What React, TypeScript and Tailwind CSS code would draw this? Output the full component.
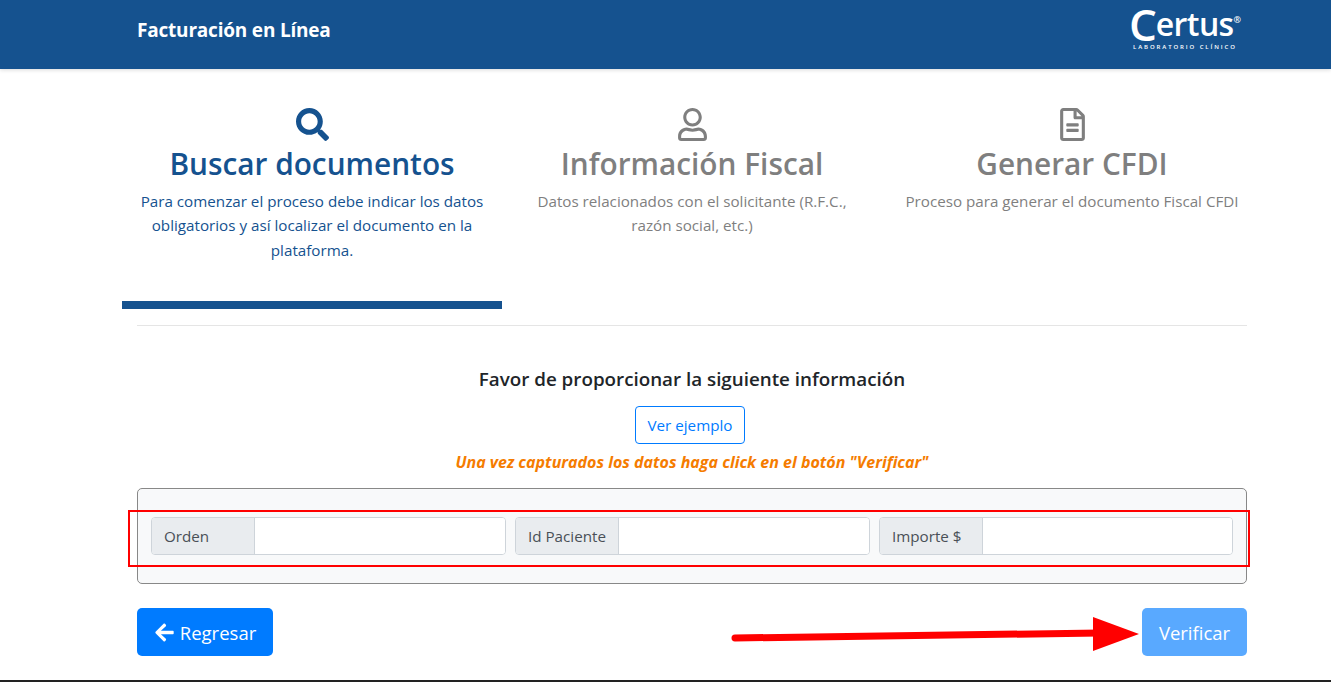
import { FaSearch, FaRegUser, FaRegFileAlt, FaArrowLeft } from "react-icons/fa";

const font = "font-['Open_Sans','Noto_Sans',sans-serif]";

const steps = [
  {
    title: "Buscar documentos",
    desc: "Para comenzar el proceso debe indicar los datos obligatorios y así localizar el documento en la plataforma.",
    icon: <FaSearch className="h-[33px] w-[33px]" />,
    color: "text-[#15528f]",
    active: true,
  },
  {
    title: "Información Fiscal",
    desc: "Datos relacionados con el solicitante (R.F.C., razón social, etc.)",
    icon: <FaRegUser className="h-[33px] w-[33px]" />,
    color: "text-[#7f7f7f]",
    active: false,
  },
  {
    title: "Generar CFDI",
    desc: "Proceso para generar el documento Fiscal CFDI",
    icon: <FaRegFileAlt className="h-[33px] w-[33px]" />,
    color: "text-[#7f7f7f]",
    active: false,
  },
];

const fields = ["Orden", "Id Paciente", "Importe $"];

function Logo() {
  return (
    <div className="flex w-[112px] flex-col items-center text-white">
      <div className="flex h-[30px] items-end font-['Open_Sans',sans-serif] font-semibold">
        <span className="text-[44px] leading-[30px]">C</span>
        <span className="ml-[-1px] text-[32px] leading-[30px] tracking-[-0.6px]">ertus</span>
        <span className="mb-[15px] text-[9px] leading-none">®</span>
      </div>
      <div className="mt-[5px] font-['Open_Sans',sans-serif] text-[6px] font-semibold leading-none tracking-[1.9px]">
        LABORATORIO CLÍNICO
      </div>
    </div>
  );
}

function Field({ label }: { label: string }) {
  return (
    <div className="flex h-[38px] overflow-hidden rounded-[4px] border border-[#ced4da] bg-white">
      <span className="flex w-[103px] shrink-0 items-center border-r border-[#ced4da] bg-[#e9ecef] px-3 text-[#495057]">
        {label}
      </span>
      <input className="min-w-0 flex-1 bg-white outline-none" />
    </div>
  );
}

export default function App() {
  return (
    <div className={`${font} relative h-[682px] overflow-hidden bg-white text-[15.2px] text-[#212529]`}>
      <header className="h-[69px] bg-[#15528f] shadow-[0_1px_4px_rgba(0,0,0,0.15)]">
        <div className="ml-[122px] flex h-full w-[1140px] items-center justify-between px-[15px]">
          <h1 className="mt-[-8px] text-[19px] font-bold tracking-[-0.2px] text-white">Facturación en Línea</h1>
          <div className="mr-[6px] mt-[-11px]">
            <Logo />
          </div>
        </div>
      </header>

      <main className="ml-[122px] w-[1140px]">
        <div className="flex pt-[39px]">
          {steps.map((s) => (
            <div key={s.title} className={`flex h-[193px] w-[380px] flex-col items-center ${s.color}`}>
              {s.icon}
              <h2 className="mt-[1px] text-[29.8px] font-semibold leading-[44px]">{s.title}</h2>
              <p className="mt-[3px] px-[15px] text-center leading-[24.3px]">{s.desc}</p>
            </div>
          ))}
        </div>
        <div className="h-[8px] w-[380px] bg-[#15528f]" />

        <div className="px-[15px]">
          <hr className="mt-[16px] border-[#e5e5e5]" />

          <div className="flex flex-col items-center">
            <h3 className="mt-[40px] text-[18.8px] font-semibold leading-[26px]">
              Favor de proporcionar la siguiente información
            </h3>
            <button className="mr-[4px] mt-[14px] h-[38px] w-[110px] rounded-[4px] border border-[#007bff] text-[#007bff]">
              Ver ejemplo
            </button>
            <p className="mt-[7px] text-[16px] font-bold italic leading-[22px] text-[#f57c00]">
              Una vez capturados los datos haga click en el botón "Verificar"
            </p>
          </div>

          <div className="mt-[15px] grid h-[96px] grid-cols-[355px_355px_354px] items-center gap-[9px] rounded-[5px] border border-[#888888] bg-[#f8f9fa] pl-[13px]">
            {fields.map((f) => (
              <Field key={f} label={f} />
            ))}
          </div>

          <div className="mt-[24px] flex justify-between">
            <button className="flex h-[48px] w-[136px] items-center justify-center gap-[5px] rounded-[5px] bg-[#007bff] pt-[1px] text-[18.5px] text-white">
              <FaArrowLeft className="h-[21px] w-[21px]" />
              Regresar
            </button>
            <button className="h-[48px] w-[105px] rounded-[5px] bg-[#59a9ff] pt-[1px] text-[18.5px] text-white">
              Verificar
            </button>
          </div>
        </div>
      </main>

      {/* red annotations drawn over the page */}
      <div className="absolute left-[128px] top-[510px] h-[57px] w-[1122px] border-2 border-[#ff0000]" />
      <svg className="absolute left-[725px] top-[610px]" width="415" height="45" viewBox="0 0 415 45">
        <path d="M10 28 L375 23" stroke="#ff0000" strokeWidth="7" strokeLinecap="round" />
        <path d="M368 7 L368 41 L414 24 Z" fill="#ff0000" />
      </svg>
      <div className="absolute bottom-0 left-0 h-[2px] w-full bg-[#222222]" />
    </div>
  );
}
